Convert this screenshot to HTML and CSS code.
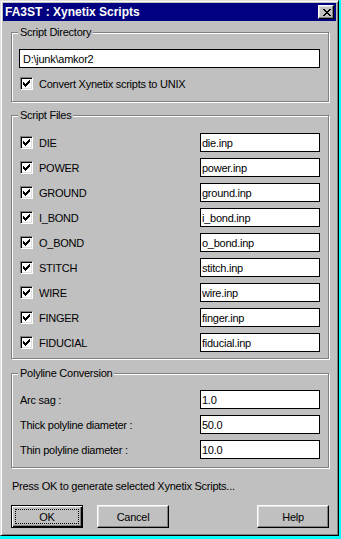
FILE: index.html
```html
<!DOCTYPE html>
<html lang="en">
<head>
<meta charset="UTF-8">
<meta name="viewport" content="width=device-width, initial-scale=1.0">
<title>FA3ST : Xynetix Scripts</title>
<link rel="stylesheet" href="styles.css">
</head>
<body>
  <div class="window">
    <div class="titlebar">
      <span class="title">FA3ST : Xynetix Scripts</span>
      <button class="close-btn" aria-label="Close">
        <svg width="8" height="7" viewBox="0 0 8 7" shape-rendering="crispEdges"><path d="M0 0h2v1H0zM6 0h2v1H6zM1 1h2v1H1zM5 1h2v1H5zM2 2h4v1H2zM3 3h2v1H3zM2 4h4v1H2zM1 5h2v1H1zM5 5h2v1H5zM0 6h2v1H0zM6 6h2v1H6z" fill="#000"/></svg>
      </button>
    </div>

    <div class="dialog">
      <fieldset class="group group-dir">
        <legend>Script Directory</legend>
        <input class="field field-dir" type="text" value="D:\junk\amkor2">
        <label class="check-row">
          <span class="checkbox"><svg width="7" height="7" viewBox="0 0 7 7" shape-rendering="crispEdges"><path d="M0 2h1v3H0zM1 3h1v3H1zM2 4h1v3H2zM3 3h1v3H3zM4 2h1v3H4zM5 1h1v3H5zM6 0h1v3H6z"/></svg></span>
          Convert Xynetix scripts to UNIX
        </label>
      </fieldset>

      <fieldset class="group group-files">
        <legend>Script Files</legend>
        <div class="row">
          <label class="check-row"><span class="checkbox"><svg width="7" height="7" viewBox="0 0 7 7" shape-rendering="crispEdges"><path d="M0 2h1v3H0zM1 3h1v3H1zM2 4h1v3H2zM3 3h1v3H3zM4 2h1v3H4zM5 1h1v3H5zM6 0h1v3H6z"/></svg></span>DIE</label>
          <input class="field" type="text" value="die.inp">
        </div>
        <div class="row">
          <label class="check-row"><span class="checkbox"><svg width="7" height="7" viewBox="0 0 7 7" shape-rendering="crispEdges"><path d="M0 2h1v3H0zM1 3h1v3H1zM2 4h1v3H2zM3 3h1v3H3zM4 2h1v3H4zM5 1h1v3H5zM6 0h1v3H6z"/></svg></span>POWER</label>
          <input class="field" type="text" value="power.inp">
        </div>
        <div class="row">
          <label class="check-row"><span class="checkbox"><svg width="7" height="7" viewBox="0 0 7 7" shape-rendering="crispEdges"><path d="M0 2h1v3H0zM1 3h1v3H1zM2 4h1v3H2zM3 3h1v3H3zM4 2h1v3H4zM5 1h1v3H5zM6 0h1v3H6z"/></svg></span>GROUND</label>
          <input class="field" type="text" value="ground.inp">
        </div>
        <div class="row">
          <label class="check-row"><span class="checkbox"><svg width="7" height="7" viewBox="0 0 7 7" shape-rendering="crispEdges"><path d="M0 2h1v3H0zM1 3h1v3H1zM2 4h1v3H2zM3 3h1v3H3zM4 2h1v3H4zM5 1h1v3H5zM6 0h1v3H6z"/></svg></span>I_BOND</label>
          <input class="field" type="text" value="i_bond.inp">
        </div>
        <div class="row">
          <label class="check-row"><span class="checkbox"><svg width="7" height="7" viewBox="0 0 7 7" shape-rendering="crispEdges"><path d="M0 2h1v3H0zM1 3h1v3H1zM2 4h1v3H2zM3 3h1v3H3zM4 2h1v3H4zM5 1h1v3H5zM6 0h1v3H6z"/></svg></span>O_BOND</label>
          <input class="field" type="text" value="o_bond.inp">
        </div>
        <div class="row">
          <label class="check-row"><span class="checkbox"><svg width="7" height="7" viewBox="0 0 7 7" shape-rendering="crispEdges"><path d="M0 2h1v3H0zM1 3h1v3H1zM2 4h1v3H2zM3 3h1v3H3zM4 2h1v3H4zM5 1h1v3H5zM6 0h1v3H6z"/></svg></span>STITCH</label>
          <input class="field" type="text" value="stitch.inp">
        </div>
        <div class="row">
          <label class="check-row"><span class="checkbox"><svg width="7" height="7" viewBox="0 0 7 7" shape-rendering="crispEdges"><path d="M0 2h1v3H0zM1 3h1v3H1zM2 4h1v3H2zM3 3h1v3H3zM4 2h1v3H4zM5 1h1v3H5zM6 0h1v3H6z"/></svg></span>WIRE</label>
          <input class="field" type="text" value="wire.inp">
        </div>
        <div class="row">
          <label class="check-row"><span class="checkbox"><svg width="7" height="7" viewBox="0 0 7 7" shape-rendering="crispEdges"><path d="M0 2h1v3H0zM1 3h1v3H1zM2 4h1v3H2zM3 3h1v3H3zM4 2h1v3H4zM5 1h1v3H5zM6 0h1v3H6z"/></svg></span>FINGER</label>
          <input class="field" type="text" value="finger.inp">
        </div>
        <div class="row">
          <label class="check-row"><span class="checkbox"><svg width="7" height="7" viewBox="0 0 7 7" shape-rendering="crispEdges"><path d="M0 2h1v3H0zM1 3h1v3H1zM2 4h1v3H2zM3 3h1v3H3zM4 2h1v3H4zM5 1h1v3H5zM6 0h1v3H6z"/></svg></span>FIDUCIAL</label>
          <input class="field" type="text" value="fiducial.inp">
        </div>
      </fieldset>

      <fieldset class="group group-poly">
        <legend>Polyline Conversion</legend>
        <div class="row">
          <span class="row-label">Arc sag :</span>
          <input class="field" type="text" value="1.0">
        </div>
        <div class="row">
          <span class="row-label">Thick polyline diameter :</span>
          <input class="field" type="text" value="50.0">
        </div>
        <div class="row">
          <span class="row-label">Thin polyline diameter :</span>
          <input class="field" type="text" value="10.0">
        </div>
      </fieldset>

      <p class="hint">Press OK to generate selected Xynetix Scripts...</p>

      <div class="buttons">
        <button class="btn btn-default"><span class="focus">OK</span></button>
        <button class="btn">Cancel</button>
        <button class="btn btn-help">Help</button>
      </div>
    </div>
  </div>
</body>
</html>
```

FILE: styles.css
```css
body {
  margin: 0;
  background-color: #00ffff;
  font-family: "Liberation Sans", Arial, sans-serif;
  font-size: 11px;
  letter-spacing: -0.25px;
  color: #000;
}

/* win95 style window frame */
.window {
  box-sizing: border-box;
  width: 339px;
  height: 536px;
  padding: 2px;
  background-color: #c0c0c0;
  border: 1px solid;
  border-color: #dfdfdf #000 #000 #dfdfdf;
  box-shadow: inset 1px 1px #fff, inset -1px -1px #808080;
}

.titlebar {
  display: flex;
  align-items: center;
  height: 18px;
  background-color: #000080;
  color: #fff;
}
.title {
  flex: 1;
  padding-left: 2px;
  font-size: 12px;
  font-weight: bold;
  letter-spacing: 0;
}
.close-btn {
  display: flex;
  align-items: center;
  justify-content: center;
  box-sizing: border-box;
  width: 16px;
  height: 14px;
  margin-right: 2px;
  padding: 0 0 0 1px;
  background-color: #c0c0c0;
  border: 1px solid;
  border-color: #fff #000 #000 #fff;
  box-shadow: inset -1px -1px #808080, inset 1px 1px #dfdfdf;
}

.dialog {
  padding: 0 7px 0 8px;
}

/* etched group boxes */
.group {
  margin: 0;
  min-inline-size: 0;
  border: 1px solid #808080;
  box-shadow: inset 1px 1px #fff, 1px 1px #fff;
}
.group legend {
  margin-left: -1px;
  padding: 0 2px;
  line-height: 13px;
  background-color: #c0c0c0;
}
.group-dir {
  margin-top: 5px;
  padding: 10px 8px 11px 7px;
}
.group-files {
  display: flex;
  flex-direction: column;
  gap: 6px;
  margin-top: 7px;
  padding: 11px 8px 6px 7px;
}
.group-poly {
  display: flex;
  flex-direction: column;
  gap: 6px;
  margin-top: 8px;
  padding: 10px 8px 8px 7px;
}

.field {
  box-sizing: border-box;
  width: 120px;
  height: 19px;
  margin: 0;
  padding: 0 1px;
  border: 1px solid #000;
  background-color: #fff;
  font: inherit;
  letter-spacing: inherit;
  color: #000;
}
.field-dir {
  display: block;
  width: 100%;
  padding-left: 3px;
}

.row {
  display: flex;
  align-items: center;
  justify-content: space-between;
}
.row-label {
  margin-left: 1px;
}

.check-row {
  display: flex;
  align-items: center;
  height: 13px;
}
.group-dir .check-row {
  margin-top: 9px;
}
.checkbox {
  display: flex;
  box-sizing: border-box;
  width: 13px;
  height: 13px;
  margin: 0 6px 0 1px;
  padding: 2px;
  background-color: #fff;
  border: 1px solid;
  border-color: #808080 #fff #fff #808080;
  box-shadow: inset 1px 1px #000, inset -1px -1px #dfdfdf;
}

.hint {
  margin: 12px 0 0 1px;
  line-height: 13px;
}

.buttons {
  display: flex;
  gap: 14px;
  margin-top: 12px;
}
.btn {
  box-sizing: border-box;
  width: 72px;
  height: 23px;
  padding: 0;
  background-color: #c0c0c0;
  border: 1px solid;
  border-color: #fff #000 #000 #fff;
  box-shadow: inset -1px -1px #808080, inset 1px 1px #dfdfdf;
  font: inherit;
  letter-spacing: inherit;
  color: #000;
}
.btn-default {
  display: flex;
  padding: 3px;
  border-color: #000;
  box-shadow: inset 1px 1px #fff, inset -1px -1px #000, inset -2px -2px #808080;
}
.focus {
  display: flex;
  flex: 1;
  align-items: center;
  justify-content: center;
  border: 1px dotted #000;
}
.btn-help {
  margin-left: auto;
}
```
